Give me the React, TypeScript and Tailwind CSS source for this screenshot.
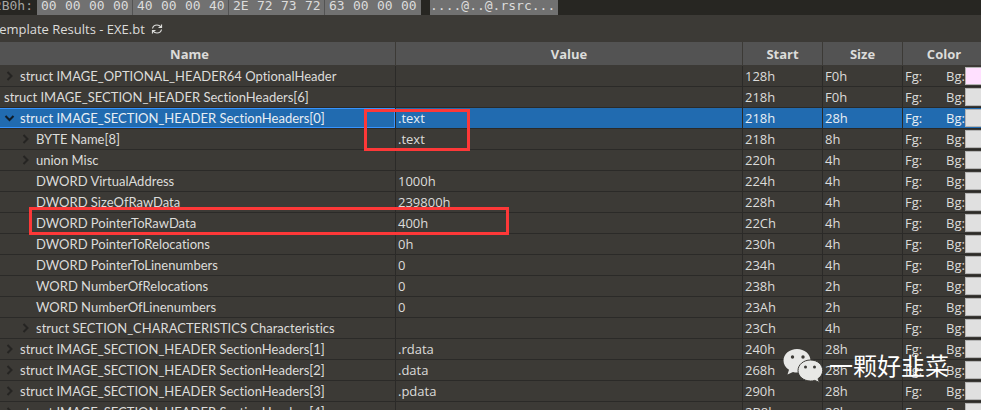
import React from "react";

type Row = {
  name: string;
  value?: string;
  start: string;
  size: string;
  level: 0 | 1 | 2;
  toggle?: "open" | "closed";
  swatch?: string;
};

const rows: Row[] = [
  { name: "struct IMAGE_OPTIONAL_HEADER64 OptionalHeader", start: "128h", size: "F0h", level: 1, toggle: "closed", swatch: "bg-[#ffe0ff]" },
  { name: "struct IMAGE_SECTION_HEADER SectionHeaders[6]", start: "218h", size: "F0h", level: 0 },
  { name: "struct IMAGE_SECTION_HEADER SectionHeaders[0]", value: ".text", start: "218h", size: "28h", level: 1, toggle: "open" },
  { name: "BYTE Name[8]", value: ".text", start: "218h", size: "8h", level: 2, toggle: "closed" },
  { name: "union Misc", start: "220h", size: "4h", level: 2, toggle: "closed" },
  { name: "DWORD VirtualAddress", value: "1000h", start: "224h", size: "4h", level: 2 },
  { name: "DWORD SizeOfRawData", value: "239800h", start: "228h", size: "4h", level: 2 },
  { name: "DWORD PointerToRawData", value: "400h", start: "22Ch", size: "4h", level: 2 },
  { name: "DWORD PointerToRelocations", value: "0h", start: "230h", size: "4h", level: 2 },
  { name: "DWORD PointerToLinenumbers", value: "0", start: "234h", size: "4h", level: 2 },
  { name: "WORD NumberOfRelocations", value: "0", start: "238h", size: "2h", level: 2 },
  { name: "WORD NumberOfLinenumbers", value: "0", start: "23Ah", size: "2h", level: 2 },
  { name: "struct SECTION_CHARACTERISTICS Characteristics", start: "23Ch", size: "4h", level: 2, toggle: "closed" },
  { name: "struct IMAGE_SECTION_HEADER SectionHeaders[1]", value: ".rdata", start: "240h", size: "28h", level: 1, toggle: "closed" },
  { name: "struct IMAGE_SECTION_HEADER SectionHeaders[2]", value: ".data", start: "268h", size: "28h", level: 1, toggle: "closed" },
  { name: "struct IMAGE_SECTION_HEADER SectionHeaders[3]", value: ".pdata", start: "290h", size: "28h", level: 1, toggle: "closed" },
  { name: "struct IMAGE_SECTION_HEADER SectionHeaders[4]", start: "2B8h", size: "28h", level: 1, toggle: "closed" },
];

const hexGroups = ["00 00 00 00", "40 00 00 40", "2E 72 73 72", "63 00 00 00"];
const indents = ["pl-1", "pl-1", "pl-5"];

function HexStrip() {
  return (
    <div className="flex h-[15px] items-start overflow-hidden bg-[#272622] font-['DejaVu_Sans_Mono',monospace] text-[13px] leading-3 whitespace-pre text-[#dcdcdc]">
      <span className="flex w-[37px] shrink-0 justify-end pr-1 text-[#a5a5a2]">02B0h:</span>
      {hexGroups.map((group, i) => (
        <span key={i} className={`flex h-4 w-24 shrink-0 bg-[#717171] ${i < 3 ? "border-r border-[#535353]" : ""}`}>
          {group.split(" ").map((byte, j) => (
            <span key={j} className="w-6 shrink-0 pl-1">{byte}</span>
          ))}
        </span>
      ))}
      <span className="ml-[9px] h-4 w-32 shrink-0 bg-[#717171]">....@..@.rsrc...</span>
    </div>
  );
}

function Chevron({ open }: { open: boolean }) {
  return (
    <svg viewBox="0 0 12 12" className={open ? "size-3 text-[#101c28]" : "size-3 text-[#252422]"} fill="none" stroke="currentColor" strokeWidth="2">
      <path d={open ? "M1.500 4l4 4 4-4" : "M3.500 2l4 4-4 4"} />
    </svg>
  );
}

function TreeRow({ row }: { row: Row }) {
  const selected = row.toggle === "open";
  const cell = "h-[21px] border-b border-r border-[#2b2a28] p-0 whitespace-nowrap";
  return (
    <tr className={selected ? "bg-[#216bb0] text-[#e8eef4]" : ""}>
      <td className={cell}>
        <div className={`flex h-5 items-center font-[Lato,sans-serif] [font-variant-ligatures:none] ${indents[row.level]} ${selected ? "shadow-[inset_-1px_1px_0_#3794ff,inset_0_-1px_0_#3794ff]" : ""}`}>
          {row.level > 0 && (
            <span className="flex w-4 shrink-0">
              {row.toggle && (
                <button type="button" aria-label={`Toggle ${row.name}`} aria-expanded={selected}>
                  <Chevron open={selected} />
                </button>
              )}
            </span>
          )}
          {row.name}
        </div>
      </td>
      <td className={`${cell} pl-0.5`}>{row.value}</td>
      <td className={`${cell} pl-0.5`}>{row.start}</td>
      <td className={`${cell} pl-0.5`}>{row.size}</td>
      <td className="h-[21px] border-b border-[#2b2a28] p-0">
        <div className="flex h-5 items-center pl-0.5">
          <span className="w-[41px]">Fg:</span>
          <span className="w-[19px]">Bg:</span>
          <span className={`h-[18px] flex-1 border border-r-0 border-[#b4b4b4] ${row.swatch ?? "bg-[#e0e0e0]"}`} />
        </div>
      </td>
    </tr>
  );
}

function WeChatMark() {
  return (
    <svg viewBox="0 0 40 34" className="h-[34px] w-10" fill="#e8e8e6">
      <path d="M14 0C6.500 0 .5 5 .5 11.500c0 4 2 7 5.500 9.200L4.500 25.500l5.500-2.600c1.300.4 2.600.6 4 .6C21.500 23.500 27.500 18 27.500 11.500S21.500 0 14 0z" />
      <path d="M27.500 11c-7 0-12.500 4.700-12.500 10.500s5.500 10.500 12.500 10.500c1.500 0 3-.2 4.300-.6l4.700 2.100-1.500-3.800c3-2 4.700-4.800 4.700-8.200 0-5.800-5.200-10.500-12.200-10.500z" stroke="#3c3a36" />
      <g fill="#3c3a36">
        <circle cx="9.500" cy="8" r="1.700" />
        <circle cx="20" cy="8" r="1.700" />
        <circle cx="22.500" cy="18" r="1.500" />
        <circle cx="31.500" cy="18" r="1.500" />
      </g>
    </svg>
  );
}

export default function App() {
  const head = "h-6 border-r border-b border-[#3c3a36] p-0 font-bold";
  return (
    <main className="relative h-screen overflow-hidden bg-[#3c3a36] font-['Open_Sans','Noto_Sans_CJK_SC',sans-serif] text-[13px] leading-5 text-[#dcdcda]">
      <HexStrip />
      <header className="flex h-[27px] items-center gap-1.5">
        <h1 className="-ml-2 whitespace-nowrap">Template Results - EXE.bt</h1>
        <button type="button" aria-label="Refresh">
          <svg viewBox="0 0 12 12" className="size-3" fill="none" stroke="currentColor" strokeWidth="1.200">
            <path d="M1.500 5.500C2 3 4 2 6 2c1.700 0 3 .8 4 2.200M10.500 1.500v3h-3M10.500 6.500C10 9 8 10 6 10c-1.700 0-3-.8-4-2.200M1.500 10.500v-3h3" />
          </svg>
        </button>
      </header>
      <table className="w-full table-fixed border-separate border-spacing-0">
        <colgroup>
          <col className="w-[396px]" />
          <col />
          <col className="w-20" />
          <col className="w-20" />
          <col className="w-[78px]" />
        </colgroup>
        <thead className="bg-[#535353]">
          <tr>
            <th className={`${head} pr-4`}>Name</th>
            <th className={head}>Value</th>
            <th className={head}>Start</th>
            <th className={head}>Size</th>
            <th className="h-6 border-b border-[#3c3a36] p-0 pl-1 font-bold">Color</th>
          </tr>
        </thead>
        <tbody>
          {rows.map((row) => (
            <TreeRow key={row.name} row={row} />
          ))}
        </tbody>
      </table>
      <div className="absolute top-[109px] left-[364px] h-[42px] w-[106px] border-3 border-[#fd3838]" />
      <div className="absolute top-[207px] left-[29px] h-7 w-[480px] border-3 border-[#fd3838]" />
      <div className="absolute top-[348px] right-8 flex items-center gap-1.5 text-[24px] leading-9 text-white">
        <WeChatMark />
        <span className="whitespace-nowrap">一颗好韭菜</span>
      </div>
    </main>
  );
}
